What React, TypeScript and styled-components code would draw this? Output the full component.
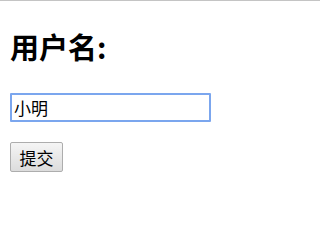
import React, { useEffect, useRef } from "react";
import styled, { createGlobalStyle } from "styled-components";

const GlobalStyle = createGlobalStyle`
  html, body {
    margin: 0;
    padding: 0;
    background: #fff;
  }

  body {
    border-top: 1px solid #c4c4c4;
    font-family: "Noto Sans CJK SC", "Noto Sans", sans-serif;
    color: #000;
  }
`;

const Page = styled.div`
  display: flex;
  flex-direction: column;
  align-items: flex-start;
  padding: 25px 10px;
`;

const Label = styled.h2`
  margin: 0;
  font-size: 29px;
  line-height: 40px;
  font-weight: 700;
`;

const NameInput = styled.input`
  box-sizing: border-box;
  width: 201px;
  height: 29px;
  margin-top: 27px;
  padding: 0 2px;
  border: 2px solid #7ba6ee;
  border-radius: 1px;
  outline: none;
  font-family: "Noto Sans CJK SC", sans-serif;
  font-size: 17px;
  color: #000;
  caret-color: #000;
`;

const SubmitButton = styled.button`
  box-sizing: border-box;
  width: 53px;
  height: 30px;
  margin-top: 20px;
  padding: 0;
  border: 1px solid #adadad;
  border-radius: 2px;
  background: linear-gradient(#f5f5f5, #dcdcdc);
  font-family: "Noto Sans CJK SC", sans-serif;
  font-size: 17px;
  color: #000;
`;

const App: React.FC = () => {
  const inputRef = useRef<HTMLInputElement>(null);

  useEffect(() => {
    const el = inputRef.current;
    if (el) {
      el.focus();
      el.setSelectionRange(el.value.length, el.value.length);
    }
  }, []);

  return (
    <>
      <GlobalStyle />
      <Page>
        <Label>用户名:</Label>
        <NameInput ref={inputRef} defaultValue="小明" />
        <SubmitButton type="button">提交</SubmitButton>
      </Page>
    </>
  );
};

export default App;
